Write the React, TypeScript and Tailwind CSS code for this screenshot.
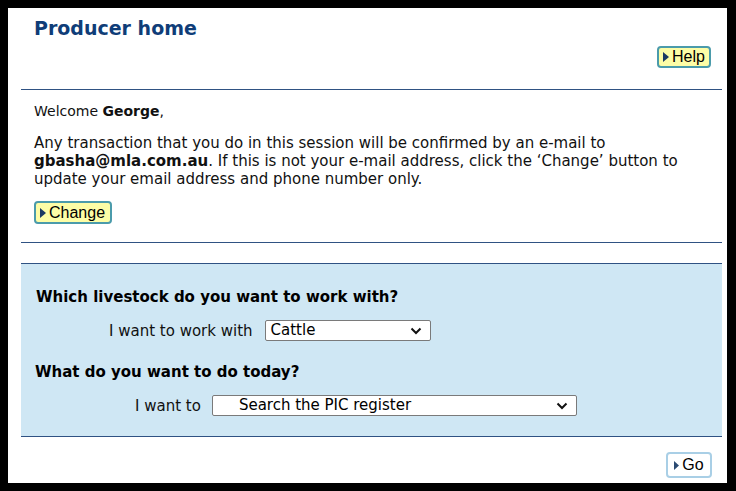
import React from "react";

function Tri({ c = "#1b3a63", w = 6, h = 10 }: { c?: string; w?: number; h?: number }) {
  return (
    <svg width={w} height={h} viewBox={`0 0 ${w} ${h}`} className="shrink-0">
      <path d={`M0 0 L${w} ${h / 2} L0 ${h} Z`} fill={c} />
    </svg>
  );
}

function YButton({ label, cls }: { label: string; cls: string }) {
  return (
    <div
      className={`flex items-center gap-[3px] rounded-[4px] border-2 border-[#4b9bab] bg-[#fdfda6] pl-[4px] pr-[3px] text-[16px] leading-none text-black ${cls}`}
      style={{ fontFamily: '"Liberation Sans", Arial, sans-serif' }}
    >
      <Tri />
      <span>{label}</span>
    </div>
  );
}

function Chevron() {
  return (
    <svg width="12" height="8" viewBox="0 0 12 8" className="shrink-0">
      <path d="M1.5 1.5 L6 6 L10.5 1.5" fill="none" stroke="#111" strokeWidth="2" />
    </svg>
  );
}

function FakeSelect({ text, w, pl }: { text: string; w: string; pl: string }) {
  return (
    <div
      className={`flex h-[21px] items-center justify-between rounded-[2px] border border-[#7a7a7a] bg-white pr-[8px] text-[15px] text-black ${w} ${pl}`}
    >
      <span>{text}</span>
      <Chevron />
    </div>
  );
}

export default function App() {
  return (
    <div
      className="h-[491px] w-[736px] bg-black pb-[8px] pl-[8px] pr-[9px] pt-[8px]"
      style={{ fontFamily: '"DejaVu Sans", Verdana, sans-serif' }}
    >
      <div className="flex h-full flex-col bg-white pl-[13px] pr-[5px] text-[15px] text-[#111]">
        <h1 className="mt-[8px] pl-[13px] text-[19px] font-bold leading-[24px] text-[#0f3d78]">
          Producer home
        </h1>
        <div className="mt-[6px] flex justify-end pr-[11px]">
          <YButton label="Help" cls="h-[22px] w-[54px]" />
        </div>
        <div className="mt-[21px] h-[1px] bg-[#2f5283]" />
        <div className="pl-[13px]">
          <p className="mt-[12px] text-[14px] leading-[18px]">
            Welcome <b>George</b>,
          </p>
          <p className="mt-[14px] leading-[18px]">
            Any transaction that you do in this session will be confirmed by an e-mail to
            <br />
            <b>gbasha@mla.com.au</b>. If this is not your e-mail address, click the ‘Change’ button to
            <br />
            update your email address and phone number only.
          </p>
          <div className="mt-[13px] flex">
            <YButton label="Change" cls="h-[23px] w-[78px]" />
          </div>
        </div>
        <div className="mt-[18px] h-[1px] bg-[#2f5283]" />
        <div className="mt-[20px] flex h-[174px] flex-col border-b border-t border-[#2f5283] bg-[#cfe7f4]">
          <div className="mt-[24px] pl-[15px] text-[15px] font-bold leading-[18px] text-black">
            Which livestock do you want to work with?
          </div>
          <div className="mt-[14px] flex items-center pl-[88px]">
            <span className="mr-[12px] leading-[18px]">I want to work with</span>
            <FakeSelect text="Cattle" w="w-[166px]" pl="pl-[5px]" />
          </div>
          <div className="mt-[22px] pl-[14px] text-[15px] font-bold leading-[18px] text-black">
            What do you want to do today?
          </div>
          <div className="mt-[14px] flex items-center pl-[114px]">
            <span className="mr-[11px] leading-[18px]">I want to</span>
            <FakeSelect text="Search the PIC register" w="w-[365px]" pl="pl-[26px]" />
          </div>
        </div>
        <div className="mt-[15px] flex justify-end pr-[10px]">
          <div
            className="flex h-[26px] w-[46px] items-center justify-center gap-[3px] rounded-[4px] border-2 border-[#a9cfe6] bg-white text-[16px] text-black"
            style={{ fontFamily: '"Liberation Sans", Arial, sans-serif' }}
          >
            <Tri c="#2b4a72" w={5} h={9} />
            <span>Go</span>
          </div>
        </div>
      </div>
    </div>
  );
}
